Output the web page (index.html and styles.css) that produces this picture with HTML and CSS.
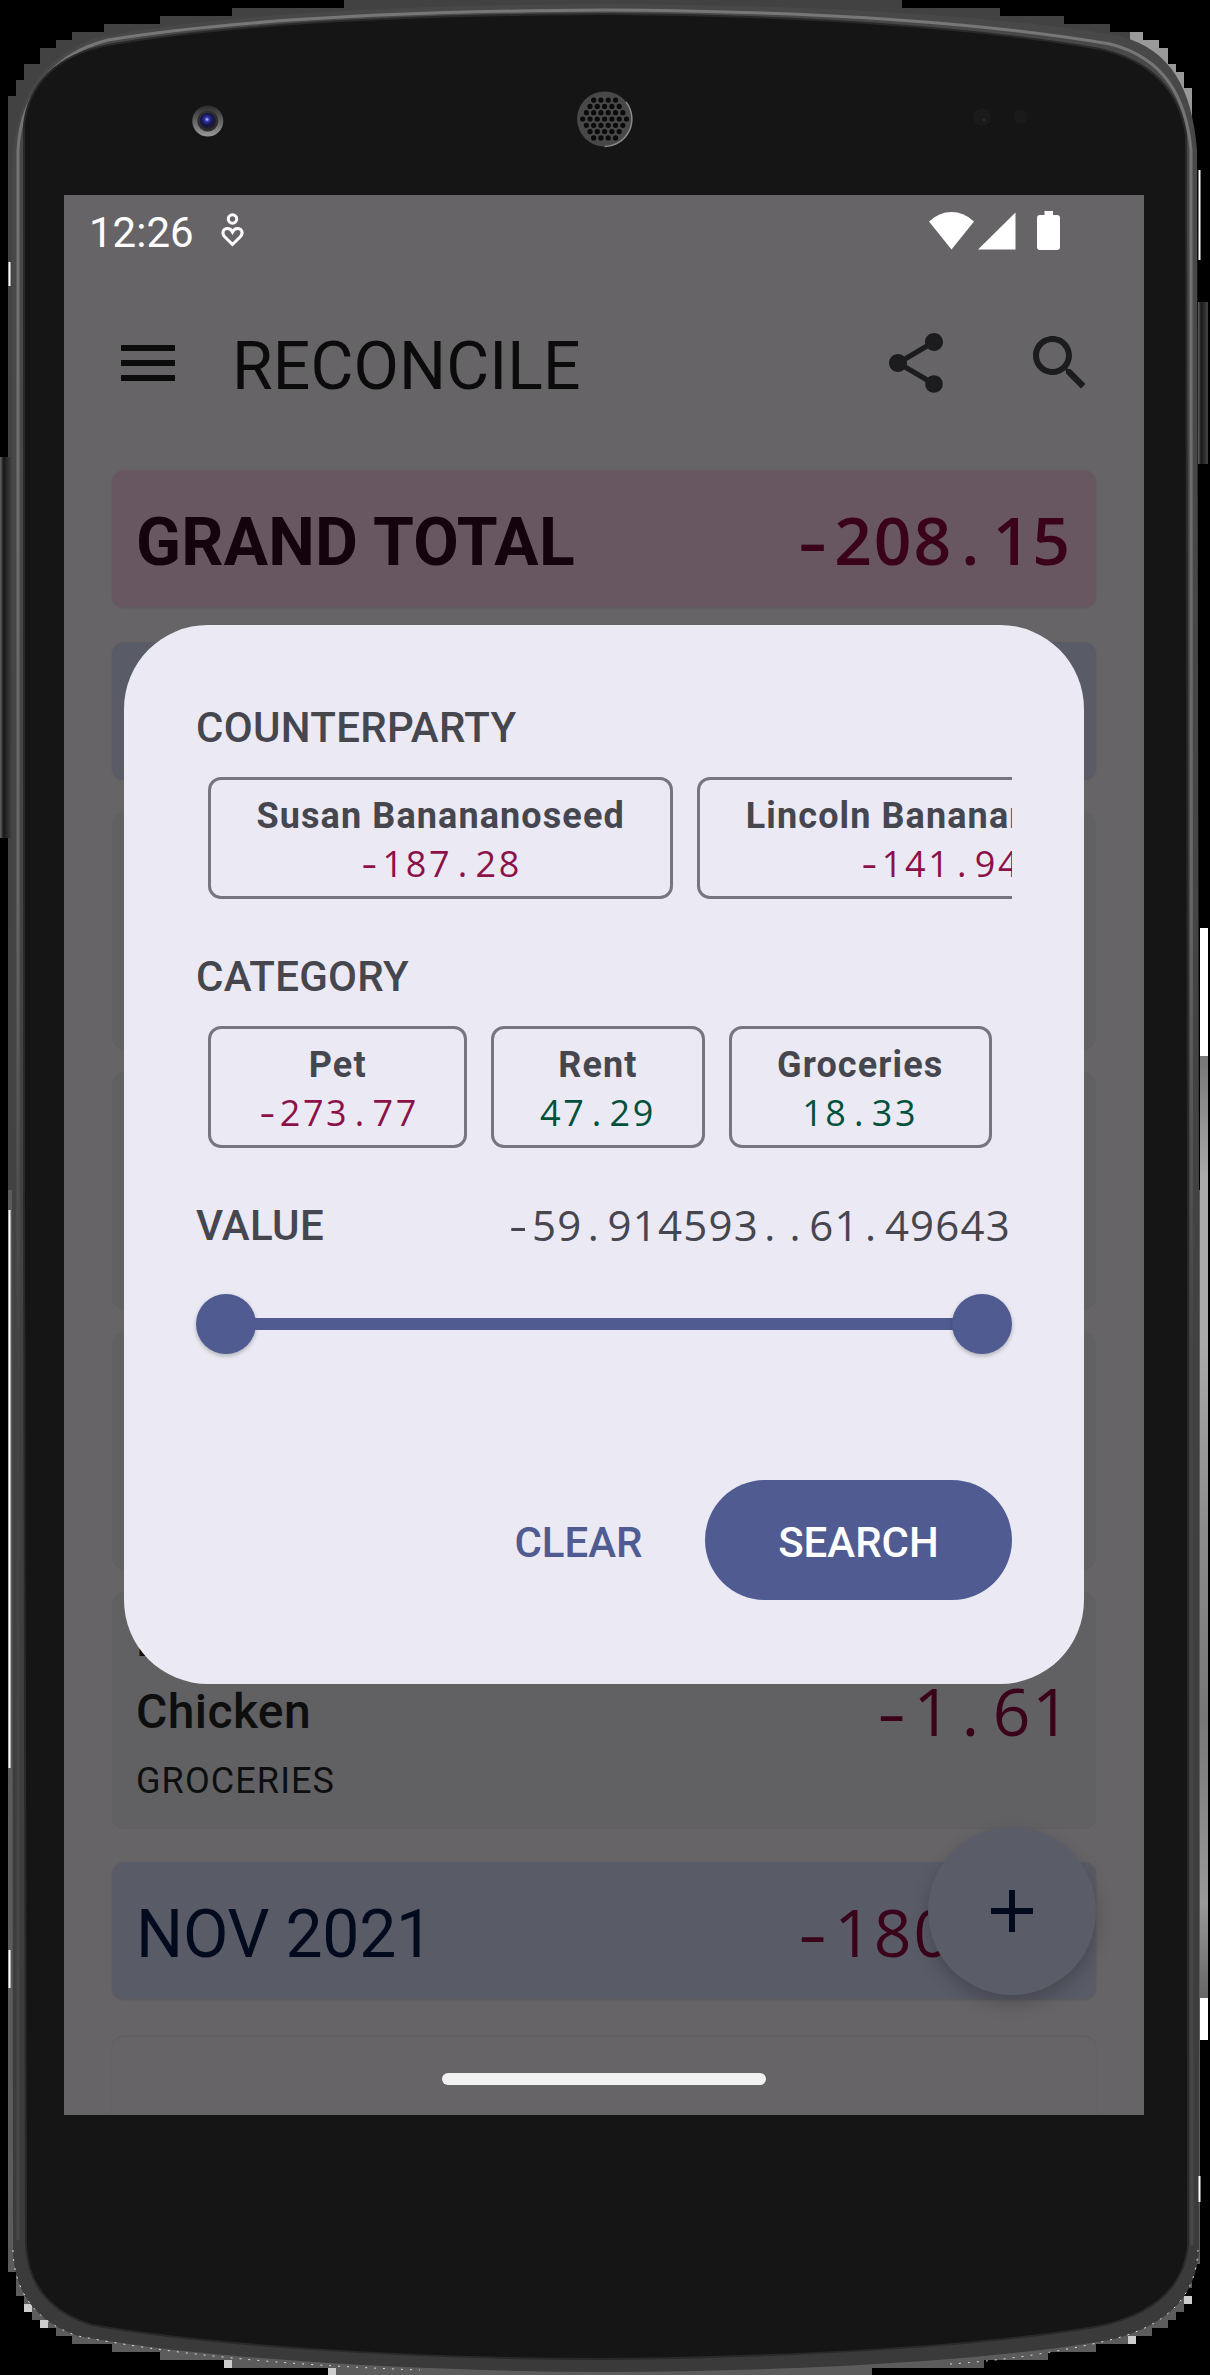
FILE: index.html
```html
<!DOCTYPE html>
<html lang="en">
<head>
<meta charset="utf-8">
<title>Reconcile</title>
<link rel="stylesheet" href="styles.css">
</head>
<body>
<div class="phone">
  <svg class="shell" viewBox="0 0 1210 2375" aria-hidden="true">
    <defs>
      <linearGradient id="edge" x1="0" y1="0" x2="0" y2="1"><stop offset="0" stop-color="#484848"/><stop offset=".15" stop-color="#484848"/><stop offset="1" stop-color="#3a3a3a"/></linearGradient>
      <linearGradient id="rim" x1="0" y1="0" x2="0" y2="1"><stop offset="0" stop-color="#777"/><stop offset=".4" stop-color="#666"/><stop offset=".6" stop-color="#444"/><stop offset="1" stop-color="#484848"/></linearGradient>
      <linearGradient id="side" x1="0" y1="0" x2="0" y2="1"><stop offset="0" stop-color="#777"/><stop offset=".13" stop-color="#aaa"/><stop offset=".3" stop-color="#aaa"/><stop offset=".5" stop-color="#8c8c8c"/><stop offset=".7" stop-color="#777"/><stop offset=".9" stop-color="#999"/><stop offset="1" stop-color="#666"/></linearGradient>
      <linearGradient id="key" x1="0" y1="0" x2="1" y2="0"><stop offset="0" stop-color="#666"/><stop offset=".3" stop-color="#181818"/><stop offset="1" stop-color="#444"/></linearGradient>
      <radialGradient id="lens" cx=".45" cy=".4" r=".6"><stop offset="0" stop-color="#c8c8f0"/><stop offset=".25" stop-color="#3030a8"/><stop offset=".6" stop-color="#15154a"/><stop offset="1" stop-color="#222"/></radialGradient>
      <linearGradient id="ring" x1="0" y1="0" x2="0" y2="1"><stop offset="0" stop-color="#2c2c2c"/><stop offset="1" stop-color="#999"/></linearGradient>
      <clipPath id="grille"><circle cx="604.600" cy="119" r="25.500"/></clipPath>
    </defs>
    <path fill="#424242" d="M8 1190V96h8V80h8V64h16V48h16v-8h16v-8h32v-8h56v-8h72V8h112V0h558v8h98v8h64v8h46v8h33v8h16v8h9v16h8v8h8v16h8V1190z"/>
    <path fill="#999" d="M1143 32v8h16v8h9v16h8v8h8v16h8v30h-6c-6-32-24-60-56-76v-10z"/>
    <path fill="#5c5c5c" d="M8 1190V2272h8v24h8v16h8v8h8v8h16v8h16v8h40v8h48v8h64v8h104v7h544v-7h112v-8h64v-8h48v-8h40v-8h16v-8h16v-8h8v-8h8v-24h8v-24h8V1190z"/>
    <path fill="#ccc" d="M24 2304h8v8h-8zM40 2320h8v8h-8zM224 2360h8v8h-8zM328 2368h8v7h-8zM1184 2296h8v8h-8zM1128 2336h8v8h-8z"/>
    <rect x="1200" y="88" width="10" height="840" fill="#000"/>
    <rect x="1200" y="928" width="8" height="128" fill="#fff"/>
    <rect x="1200" y="1056" width="8" height="942" fill="url(#side)"/>
    <rect x="1200" y="1998" width="8" height="42" fill="#fff"/>
    <rect x="0" y="457" width="12" height="381" fill="url(#key)"/>
    <rect x="1198" y="302" width="10" height="162" fill="url(#key)"/>
    <path fill="url(#edge)" d="M12 1190V170C14 100 40 58 96 38C220 14 400 5 605 4C800 5 990 14 1120 36C1172 50 1192 90 1197 150L1199 1190V2250C1196 2295 1170 2325 1110 2340C980 2362 800 2371 605 2372C400 2371 200 2358 78 2336C36 2322 14 2292 13 2250z"/>
    <path fill="none" stroke="#ddd" stroke-width="1" stroke-dasharray="2 7" d="M13 2250C14 2292 36 2322 78 2336C170 2354 280 2365 420 2370M950 2364C1000 2361 1060 2352 1110 2340C1170 2325 1196 2295 1198 2250"/>
    <path fill="none" stroke="url(#rim)" stroke-width="3" d="M18 2240V150C21 92 56 53 108 40C230 20 400 11 605 10C800 11 980 22 1110 44C1165 58 1186 98 1191 150L1192 2245"/>
    <path fill="#151515" stroke="#292929" stroke-width="2" d="M24 1190V125C28 85 56 55 108 45C230 24 400 15 605 14C800 15 980 28 1100 49C1156 62 1180 95 1186 135L1188 1190V2245C1184 2285 1156 2315 1095 2327C980 2346 800 2357 605 2359C400 2359 200 2344 92 2325C50 2312 28 2285 26 2245z"/>
    <path stroke="#fff" stroke-width="2" d="M9.500 262v24M9.500 1210v558M9.500 1950v38M1199.500 170v90M1199.500 2176v26"/>
    <g>
      <circle cx="207.800" cy="121" r="15.500" fill="url(#ring)"/>
      <circle cx="207.800" cy="121" r="10.500" fill="#2e2e2e"/>
      <circle cx="207.800" cy="121" r="8" fill="url(#lens)"/>
    </g>
    <circle cx="604.600" cy="119" r="27.500" fill="#484848"/>
    <path d="M626 102a27.500 27.500 0 0 1-21.400 44.500" fill="none" stroke="#888" stroke-width="1.500"/>
    <g stroke="#0a0a0a" stroke-width="5.200" stroke-linecap="round" stroke-dasharray="0 7.300" clip-path="url(#grille)">
      <path d="M582.700 119h44M586.350 112.700h37M586.350 125.300h37M590 106.400h30M590 131.600h30M593.650 100.100h23M593.650 137.900h23"/>
    </g>
    <circle cx="982" cy="117" r="9" fill="#1a1a1a"/>
    <circle cx="1021" cy="117" r="7" fill="#1a1a1a"/>
    <circle cx="984" cy="120" r="1" fill="#383838"/>
  </svg>

  <main class="screen">
    <header class="status">
      <span class="clock">12:26</span>
      <svg class="care" width="26" height="36" viewBox="0 0 26 36"><g fill="none" stroke="#fff" stroke-width="3"><circle cx="12.500" cy="6" r="4.200"/><path d="M12.500 31.500L4.500 23.500C1.500 20 3 16 7 15.500C9.500 15.300 11.500 17 12.500 19C13.500 17 15.500 15.300 18 15.500C22 16 23.500 20 20.500 23.500z"/></g></svg>
      <svg class="signals" width="132" height="40" viewBox="0 0 132 40" fill="#fff"><path d="M0 10.500Q10 1 22.500 1T45 10.500L22.500 38.500z"/><path d="M49 38.500L86.500 1.500V38.500z"/><path d="M115.500 0h8.500v4h4q3 0 3 3v29q0 3-3 3h-17q-3 0-3-3V7q0-3 3-3h4.500z"/></svg>
    </header>

    <nav class="appbar">
      <svg class="icon ink" viewBox="0 0 24 24"><path d="M3 18h18v-2H3v2zm0-5h18v-2H3v2zm0-7v2h18V6H3z"/></svg>
      <h1 class="title">RECONCILE</h1>
      <svg class="icon" viewBox="0 0 24 24"><path d="M18 16.080c-.76 0-1.440.3-1.960.77L8.910 12.700c.05-.23.09-.46.09-.7s-.04-.47-.09-.7l7.050-4.110c.54.5 1.250.81 2.040.81 1.660 0 3-1.340 3-3s-1.340-3-3-3-3 1.340-3 3c0 .24.04.47.09.7L8.040 9.810C7.500 9.310 6.790 9 6 9c-1.660 0-3 1.340-3 3s1.340 3 3 3c.79 0 1.500-.31 2.040-.81l7.120 4.160c-.05.21-.08.43-.08.65 0 1.610 1.310 2.920 2.920 2.920s2.920-1.310 2.920-2.920-1.310-2.920-2.920-2.920z"/></svg>
      <svg class="icon" viewBox="0 0 24 24"><path d="M15.500 14h-.79l-.28-.27C15.410 12.590 16 11.110 16 9.500 16 5.910 13.090 3 9.500 3S3 5.910 3 9.500 5.910 16 9.500 16c1.610 0 3.090-.59 4.230-1.570l.27.28v.79l5 4.990L20.490 19l-4.990-5zm-6 0C7.010 14 5 11.990 5 9.500S7.010 5 9.500 5 14 7.010 14 9.500 11.990 14 9.500 14z"/></svg>
    </nav>

    <section class="list">
      <div class="head total"><span class="name">GRAND TOTAL</span><span class="money big"><i class="minus">-</i>208<i>.</i>15</span></div>
      <div class="head month"></div>
      <div class="items">
        <div class="item"></div>
        <div class="item"></div>
        <div class="item"></div>
        <div class="item">
          <div class="lines"><b>Lincoln</b><b>Chicken</b><small>GROCERIES</small></div>
          <span class="money big"><i class="minus">-</i>1<i>.</i>61</span>
        </div>
      </div>
      <div class="head month"><span class="name">NOV 2021</span><span class="money big"><i class="minus">-</i>180<i>.</i>87</span></div>
      <div class="item next"></div>
    </section>

    <button class="fab" aria-label="Add"><svg width="42" height="42" viewBox="0 0 42 42"><path d="M18 0h6v18h18v6H24v18h-6V24H0v-6h18z" fill="#020a1e"/></svg></button>
    <div class="homebar"></div>

    <section class="dialog">
      <h2 class="label">COUNTERPARTY</h2>
      <div class="chips">
        <div class="chip"><b>Susan Banananoseed</b><span class="money neg"><i class="minus">-</i>187<i>.</i>28</span></div>
        <div class="chip"><b>Lincoln Banananoseed</b><span class="money neg"><i class="minus">-</i>141<i>.</i>94</span></div>
      </div>
      <h2 class="label">CATEGORY</h2>
      <div class="chips">
        <div class="chip"><b>Pet</b><span class="money neg"><i class="minus">-</i>273<i>.</i>77</span></div>
        <div class="chip"><b>Rent</b><span class="money pos">47<i>.</i>29</span></div>
        <div class="chip"><b>Groceries</b><span class="money pos">18<i>.</i>33</span></div>
      </div>
      <div class="value"><h2 class="label">VALUE</h2><span class="money range"><i class="minus">-</i>59<i>.</i>914593<i>.</i><i>.</i>61<i>.</i>49643</span></div>
      <div class="slider"><span class="thumb"></span><span class="track"></span><span class="thumb"></span></div>
      <div class="actions"><button class="clear">CLEAR</button><button class="search">SEARCH</button></div>
    </section>
  </main>
</div>
</body>
</html>
```
FILE: styles.css
```css
* { box-sizing: border-box; }
body { margin: 0; background: #000; font-family: Roboto, sans-serif; }
button { border: 0; padding: 0; font: inherit; }
h1, h2 { margin: 0; }

.phone { position: relative; width: 1210px; height: 2375px; padding: 195px 66px 260px 64px; overflow: hidden; }
.shell { position: absolute; left: 0; top: 0; width: 1210px; height: 2375px; }
.screen { position: relative; width: 1080px; height: 1920px; background: #676467; overflow: hidden; }

.status { display: flex; align-items: center; height: 72px; padding-left: 25px; color: #fff; }
.clock { font-size: 42px; line-height: 60px; padding-top: 3px; }
.care { margin-left: 26px; }
.signals { margin-left: auto; margin-right: 83px; }

.appbar { display: flex; align-items: center; height: 192px; padding: 0 48px; }
.icon { width: 72px; height: 72px; fill: #1c1b1e; }
.icon + .icon { margin-left: 72px; }
.icon.ink { fill: #0b0b0c; }
.title { flex: 1; margin-left: 48px; padding-top: 8px; font-size: 66px; line-height: 78px; font-weight: 400; letter-spacing: .1px; color: #0b0b0c; }

.list { padding: 11px 48px 0; display: flex; flex-direction: column; }
.head { display: flex; align-items: center; justify-content: space-between; height: 137px; padding: 0 24px; border-radius: 12px; margin-bottom: 35px; box-shadow: 0 1px 2px rgba(0, 0, 0, .12); font-size: 66px; }
.head .name { line-height: 78px; padding-top: 8px; }
.head .money { padding-top: 1px; }
.total { background: #685760; color: #14030d; font-weight: 700; }
.total .name { letter-spacing: .2px; }
.month { background: #595b67; color: #020a1e; }
.month .name { letter-spacing: -.2px; }
.month + .items { margin-top: -3px; }
.items { display: flex; flex-direction: column; gap: 24px; margin-bottom: 35px; }
.item { display: flex; align-items: center; justify-content: space-between; height: 236px; padding: 0 24px; border-radius: 12px; background: #616163; box-shadow: 0 1px 1px rgba(0, 0, 0, .06); }
.items .item { position: relative; top: 1px; }
.item.next { margin-top: 3px; height: 90px; background: #666466; border-radius: 12px 12px 0 0; box-shadow: 0 -1px 2px rgba(0, 0, 0, .08); }
.lines { align-self: flex-start; display: flex; flex-direction: column; padding-top: 12px; color: #0e0e0f; }
.lines b { font-size: 48px; line-height: 72px; font-weight: 500; letter-spacing: .4px; }
.lines small { font-size: 36px; line-height: 66px; letter-spacing: 1.1px; }

/* Amounts sit on a fixed pitch so that columns of digits line up. */
.money { --pitch: 39.6px; display: inline-block; font-family: "Open Sans", sans-serif; letter-spacing: calc(var(--pitch) - .5713em); white-space: nowrap; }
.money i { display: inline-block; width: var(--pitch); font-style: normal; letter-spacing: 0; text-align: center; text-indent: -.08em; }
.money .minus { text-indent: -.05em; transform: scaleX(1.35); }
.big { font-size: 66px; line-height: 90px; color: #3a0319; }
.total .big { font-weight: 600; }

.fab { position: absolute; left: 864px; top: 1632px; width: 168px; height: 168px; border-radius: 50%; background: #5a5c68; display: flex; align-items: center; justify-content: center; box-shadow: 0 8px 18px rgba(0, 0, 0, .22); }
.homebar { position: absolute; left: 378px; top: 1878px; width: 324px; height: 12px; border-radius: 6px; background: #f2f1f2; }

.dialog { position: absolute; left: 60px; top: 430px; width: 960px; height: 1059px; padding: 73px 72px 0; border-radius: 84px; background: #ebeaf4; color: #46464f; }
.label { font-size: 42px; line-height: 60px; font-weight: 500; letter-spacing: .3px; }
.chips { display: flex; gap: 24px; margin: 19px 0 48px; padding-left: 12px; overflow: hidden; }
.chip { flex: none; height: 122px; padding: 12px 45.5px 0; border: 3px solid #777680; border-radius: 13px; display: flex; flex-direction: column; align-items: center; }
.chip b { font-size: 36px; line-height: 48px; font-weight: 700; letter-spacing: 1.1px; }
.chip .money { --pitch: 23.2px; font-size: 36px; line-height: 48px; }
.neg { color: #8c1149; }
.pos { color: #00513b; }
.value { display: flex; justify-content: space-between; }
.range { --pitch: 25.2px; margin-right: 1px; font-size: 42px; line-height: 57px; }
.slider { display: flex; align-items: center; margin-top: 38px; }
.thumb { width: 60px; height: 60px; border-radius: 50%; background: #505b92; box-shadow: 0 2px 4px rgba(0, 0, 0, .25); }
.track { flex: 1; height: 12px; margin: 0 -4px; background: #505b92; }
.actions { display: flex; justify-content: flex-end; margin-top: 126px; font-size: 42px; font-weight: 500; letter-spacing: .3px; }
.actions button { height: 120px; padding-top: 5px; line-height: 60px; }
.clear { width: 189px; margin-right: 32px; background: none; color: #505b92; }
.search { width: 307px; border-radius: 60px; background: #505b92; color: #fff; }
```
